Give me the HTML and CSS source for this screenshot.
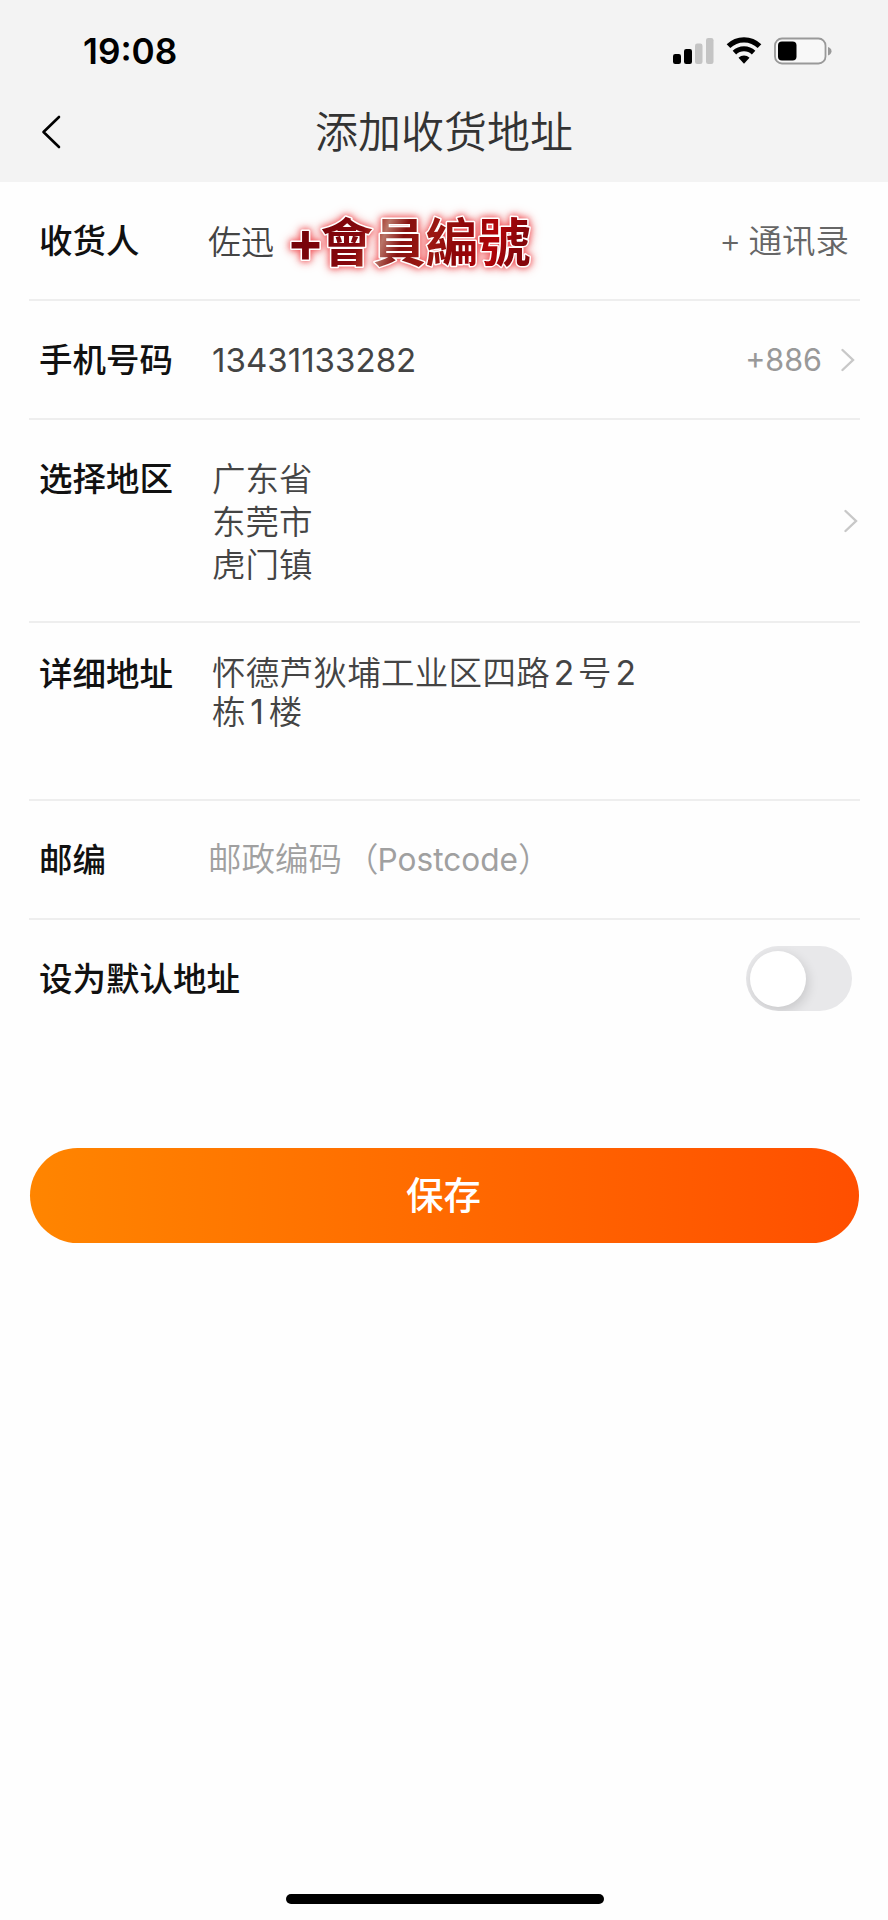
FILE: index.html
```html
<!DOCTYPE html>
<html lang="zh-CN">
<head>
<meta charset="utf-8">
<title>添加收货地址</title>
<link rel="stylesheet" href="styles.css">
</head>
<body>
<div class="screen">
  <header class="header">
    <div class="status">
      <span class="time">19:08</span>
      <div class="status-icons">
        <svg class="signal" width="42" height="28" viewBox="0 0 42 28">
          <rect x="1" y="17" width="8" height="10" rx="2.2"/>
          <rect x="12" y="12" width="8" height="15" rx="2.2"/>
          <rect class="dim" x="23" y="6.500" width="7.500" height="20.500" rx="2.200"/>
          <rect class="dim" x="34" y="1" width="7.500" height="26" rx="2.200"/>
        </svg>
        <svg class="wifi" width="36" height="28" viewBox="0 0 36 28">
          <path d="M2.500 9.200a22 22 0 0 1 31 0" fill="none" stroke="#000" stroke-width="5.200"/>
          <path d="M8.400 15.600a13.800 13.800 0 0 1 19.200 0" fill="none" stroke="#000" stroke-width="5"/>
          <path d="M12.500 20.800a8 8 0 0 1 11 0L18 26.800z"/>
        </svg>
        <svg class="battery" width="58" height="28" viewBox="0 0 58 28">
          <rect x="1" y="1.500" width="50.500" height="25" rx="7" fill="#f8f8f8" stroke="#999" stroke-width="1.800"/>
          <rect x="4" y="4.500" width="18.500" height="19" rx="4"/>
          <path d="M54 10q3.500 1.300 3.500 4.200T54 18.400z" fill="#999"/>
        </svg>
      </div>
    </div>
    <div class="nav">
      <svg class="back" width="22" height="36" viewBox="0 0 22 36"><path d="M19 3 3.500 18 19 33"/></svg>
      <h1 class="title">添加收货地址</h1>
    </div>
  </header>

  <main class="form">
    <div class="row">
      <span class="label">收货人</span>
      <span class="value name">佐迅</span>
      <svg class="sticker" width="270" height="90" viewBox="0 0 270 90">
        <defs>
          <linearGradient id="red" x1="0" y1="0" x2="1" y2="0.120">
            <stop offset="0" stop-color="#700207"/>
            <stop offset=".34" stop-color="#86070d"/>
            <stop offset=".39" stop-color="#a5281f"/>
            <stop offset=".44" stop-color="#b87467"/>
            <stop offset=".52" stop-color="#87100f"/>
            <stop offset=".64" stop-color="#9c1812"/>
            <stop offset=".76" stop-color="#8d0508"/>
            <stop offset=".9" stop-color="#b30308"/>
            <stop offset="1" stop-color="#85070b"/>
          </linearGradient>
        </defs>
        <text x="10.500" y="66" class="sticker-text"><tspan class="plus" dy="3">+</tspan><tspan x="41.500" dy="-3.500">會員編號</tspan></text>
      </svg>
      <span class="contacts">+ 通讯录</span>
    </div>
    <div class="row">
      <span class="label">手机号码</span>
      <span class="value phone">13431133282</span>
      <span class="code">+886</span>
      <svg class="chevron" width="14" height="24" viewBox="0 0 14 24"><path d="M1.500 2 12 12 1.500 22"/></svg>
    </div>
    <div class="row region">
      <span class="label">选择地区</span>
      <span class="value lines">广东省<br>东莞市<br>虎门镇</span>
      <svg class="chevron low" width="14" height="24" viewBox="0 0 14 24"><path d="M1.500 2 12 12 1.500 22"/></svg>
    </div>
    <div class="row detail">
      <span class="label">详细地址</span>
      <span class="value address">怀德芦狄埔工业区四路<i class="num">2</i>号<i class="num">2</i><br>栋<i class="num one">1</i>楼</span>
    </div>
    <div class="row">
      <span class="label">邮编</span>
      <span class="value placeholder">邮政编码<span class="paren">（</span><span class="latin">Postcode</span>）</span>
    </div>
    <div class="row last">
      <span class="label wide">设为默认地址</span>
      <span class="toggle"><span class="knob"></span></span>
    </div>
  </main>

  <button class="save">保存</button>
  <div class="home-bar"></div>
</div>
</body>
</html>
```
FILE: styles.css
```css
* { box-sizing: border-box; }

body {
  margin: 0;
  background: #fefefe;
  font-family: Inter, "Noto Sans CJK SC", sans-serif;
}

.screen {
  display: flex;
  flex-direction: column;
  width: 888px;
  height: 1920px;
  overflow: hidden;
}

.header {
  height: 182px;
  background: #f3f3f3;
}

.status {
  display: flex;
  justify-content: space-between;
  align-items: center;
  height: 100px;
  padding: 1px 56px 0 83px;
}

.time {
  font-size: 35.2px;
  font-weight: 600;
  line-height: 40px;
}

.status-icons { display: flex; align-items: center; }
.signal { margin-right: 12px; }
.wifi { margin-right: 12px; }
.dim { fill: #c4c4c4; }

.nav {
  display: grid;
  grid-template-columns: 100px 1fr 100px;
  align-items: center;
  height: 64px;
}

.back { margin-left: 40px; }
.back path {
  fill: none;
  stroke: #000;
  stroke-width: 2.6;
  stroke-linecap: round;
  stroke-linejoin: round;
}

.title {
  margin: 0;
  color: #333;
  font-size: 43px;
  font-weight: 350;
  line-height: 60px;
  text-align: center;
}

.form { padding: 0 28px 0 29px; }

.row {
  display: flex;
  align-items: center;
  height: 119px;
  padding-left: 10px;
  border-bottom: 2px solid #eee;
  font-size: 33.5px;
  line-height: 40px;
}

.label {
  flex: none;
  width: 173px;
  color: #111;
  font-weight: 500;
  white-space: nowrap;
}
.label.wide { width: auto; }

.value { color: #444; font-weight: 350; white-space: nowrap; }

.name { width: 67px; margin-left: -4px; padding-top: 2px; font-size: 33px; }
.phone { font-size: 33.1px; font-weight: 400; }

.sticker { flex: none; margin-left: 4px; overflow: visible; }
.sticker-text {
  font: 700 52.5px "Noto Sans CJK TC", sans-serif;
  fill: url(#red);
  stroke: #fff;
  stroke-width: 3px;
  stroke-linejoin: round;
  paint-order: stroke;
  filter: drop-shadow(0 0 3px #f0545a) drop-shadow(0 0 5px #f5a0a0);
}
.plus { font-weight: 900; }

.contacts {
  margin: 0 11px 0 auto;
  color: #666;
  font-weight: 350;
  word-spacing: -2px;
  white-space: pre;
}
.code { margin: 0 19px 0 auto; color: #999; font-size: 30.5px; }

.chevron { margin-right: 5px; }
.chevron path {
  fill: none;
  stroke: #c8c8c8;
  stroke-width: 2.4;
  stroke-linecap: round;
}
.chevron.low { margin: 51px 2px 0 auto; }

.region { align-items: flex-start; height: 203px; padding-top: 38px; }
.lines { line-height: 43px; }
.region .label { padding-top: 1px; }

.detail { align-items: flex-start; height: 178px; padding-top: 31px; }
.address { line-height: 39px; letter-spacing: .3px; }

.num {
  display: inline-block;
  width: 28px;
  font-style: normal;
  font-weight: 400;
  text-align: center;
}
.one { width: 23px; }

.placeholder { margin-left: -4px; color: #a0a0a0; }
.paren { margin: 0 -1px 0 3px; }
.latin { font-size: 31.6px; font-weight: 400; }

.last { height: 117px; border-bottom: 0; }

.toggle {
  width: 106px;
  height: 65px;
  margin: 0 8px 0 auto;
  padding: 5px 4px;
  border-radius: 33px;
  background: #e8e8ea;
  overflow: hidden;
}
.knob {
  display: block;
  width: 56px;
  height: 56px;
  border-radius: 50%;
  background: #fff;
  box-shadow: 2px 4px 12px rgba(0, 0, 0, .14);
}

.save {
  width: 829px;
  height: 95px;
  margin: 111px 0 0 30px;
  padding: 0 2px 7px 0;
  border: 0;
  border-radius: 48px;
  background: linear-gradient(90deg, #ff8500, #ff4f00);
  color: #fff;
  font: 500 37.5px "Noto Sans CJK SC", sans-serif;
}

.home-bar {
  width: 318px;
  height: 10px;
  margin: auto auto 16px 286px;
  border-radius: 5px;
  background: #000;
}
```
